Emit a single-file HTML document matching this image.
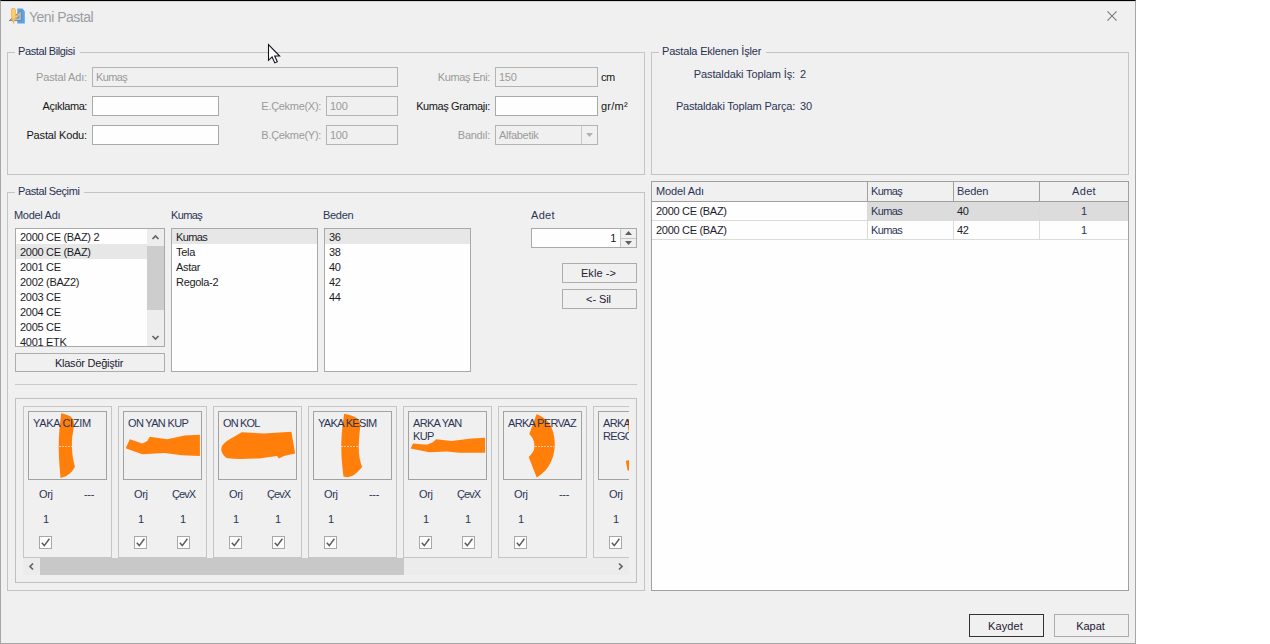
<!DOCTYPE html>
<html lang="tr">
<head>
<meta charset="utf-8">
<title>Yeni Pastal</title>
<style>
*{box-sizing:border-box;margin:0;padding:0}
html,body{width:1270px;height:644px;overflow:hidden;background:#fff}
body{font-family:"Liberation Sans",sans-serif;font-size:11px;letter-spacing:-0.3px;color:#2b3454;position:relative}
#win{position:absolute;left:0;top:0;width:1136px;height:644px;background:#f0f0f0}
#wb{position:absolute;left:0;top:0;width:1136px;height:644px;border:1px solid #a6a6a6;border-top-color:#000}
.a{position:absolute;white-space:nowrap;line-height:13px;height:13px}
.nv{color:#2b3454;letter-spacing:-0.12px}
.r{text-align:right}
.c{text-align:center}
.k{color:#141414}
.k2{color:#1c1c2c}
.dis{color:#9a9a9a}
.gb{position:absolute;border:1px solid #c4c4c4}
.gbl{position:absolute;background:#f0f0f0;padding:0 5px 0 3px;line-height:13px;height:13px;white-space:nowrap;color:#283152}
.in{color:#1c1c1c;position:absolute;border:1px solid #a9a9a9;background:#fefefe;height:20px;line-height:18px;padding-left:3px;white-space:nowrap;overflow:hidden}
.in.d{background:#f0f0f0;color:#9a9a9a;border-color:#b4b4b4}
.btn{color:#1e2030;position:absolute;border:1px solid #adadad;background:#f0f0f0;text-align:center;white-space:nowrap}
.lb{position:absolute;border:1px solid #a9a9a9;background:#fefefe;overflow:hidden}
.li{color:#1c1c26;height:15px;line-height:17px;padding-left:4px;white-space:nowrap}
.li.s{background:#e7e7e7}
.vl{position:absolute;top:202px;width:1px;height:38px;background:#dadada}
.vh{position:absolute;top:182px;width:1px;height:19px;background:#a0a0a0}
.vsb{position:absolute;left:131px;top:0;width:17px;height:117px;background:#ededed}
.vth{position:absolute;left:0;top:17px;width:17px;height:64px;background:#cdcdcd}
.card{position:absolute;top:406px;width:89px;height:152px;border:1px solid #c6c6c6}
.ib{position:absolute;top:411px;width:79px;height:69px;border:1px solid #a2a2a2}
.cn{top:417px;letter-spacing:-0.67px;white-space:nowrap}
.ck{position:absolute;top:536px}
</style>
</head>
<body>
<div id="win">
<div style="position:absolute;left:1px;top:1px;width:1134px;height:1px;background:#d6d6d6"></div><div id="wb"></div>
<!-- TITLE -->
<div id="title" class="a" style="left:29px;top:9px;font-size:14px;letter-spacing:-0.5px;line-height:16px;height:16px;color:#9a9da3">Yeni Pastal</div>
<svg id="closex" class="a" style="left:1105px;top:10px;width:13px;height:13px" viewBox="0 0 13 13"><path d="M2.4 1.4 L11.6 10.6 M11.6 1.4 L2.4 10.6" stroke="#7c7c7c" stroke-width="1.1" fill="none"/></svg>

<svg id="ticon" style="position:absolute;left:9px;top:8px" width="16" height="16" viewBox="0 0 16 16">
<path d="M8.3 0.4 H13.6 L15.8 3.6 V15.6 H8.3 Z" fill="#55a4ea"/>
<path d="M0.2 12.6 L12.4 2.6 V12.6 Z" fill="#b9bcc0" stroke="#7d8084" stroke-width="0.9"/>
<path d="M6.6 10.4 L10.4 7 V10.4 Z" fill="#4d9be0"/>
<path d="M2.4 1.6 Q2.6 0.2 4.4 0.2 Q6.2 0.2 6.4 1.6 L6.6 7.6 L9 7.2 L9 9 L6.2 9.6 L5.2 13 L4.6 15.4 L3.8 13 L3 9.8 L2.4 7 Z" fill="#f7cf6e" stroke="#f4a540" stroke-width="0.7"/>
</svg>
<!-- GROUP 1 -->
<div class="gb" style="left:7px;top:52px;width:638px;height:123px"></div>
<div class="gbl" style="left:15px;top:45px;letter-spacing:-0.4px">Pastal Bilgisi</div>
<div class="a r dis" style="left:1px;width:86px;top:71px;letter-spacing:-0.15px">Pastal Adı:</div>
<div class="in d" style="left:92px;top:67px;width:306px;letter-spacing:-0.6px">Kumaş</div>
<div class="a r k" style="left:1px;width:86px;top:100px;letter-spacing:-0.42px">Açıklama:</div>
<div class="in" style="left:92px;top:96px;width:127px"></div>
<div class="a r k" style="left:1px;width:86px;top:129px;letter-spacing:-0.15px">Pastal Kodu:</div>
<div class="in" style="left:92px;top:125px;width:127px"></div>
<div class="a r dis" style="left:221px;width:100px;top:100px">E.Çekme(X):</div>
<div class="in d" style="left:326px;top:96px;width:72px">100</div>
<div class="a r dis" style="left:221px;width:100px;top:129px">B.Çekme(Y):</div>
<div class="in d" style="left:326px;top:125px;width:72px">100</div>
<div class="a r dis" style="left:401px;width:89px;top:71px;letter-spacing:-0.4px">Kumaş Eni:</div>
<div class="in d" style="left:495px;top:67px;width:103px">150</div>
<div class="a k" style="left:601px;top:71px;letter-spacing:-0.4px">cm</div>
<div class="a r k" style="left:401px;width:89px;top:100px;letter-spacing:-0.4px">Kumaş Gramajı:</div>
<div class="in" style="left:495px;top:96px;width:103px"></div>
<div class="a k" style="left:601px;top:100px;letter-spacing:0.25px">gr/m²</div>
<div class="a r dis" style="left:401px;width:89px;top:129px">Bandıl:</div>
<div class="in d" style="left:495px;top:125px;width:103px">Alfabetik</div>
<div style="position:absolute;left:581px;top:126px;width:1px;height:18px;background:#c8c8c8"></div>
<svg style="position:absolute;left:586px;top:133px;width:7px;height:4px" viewBox="0 0 7 4"><path d="M0 0 H7 L3.5 4 Z" fill="#b0b0b0"/></svg>

<!-- GROUP 2 -->
<div class="gb" style="left:651px;top:52px;width:478px;height:123px"></div>
<div class="gbl" style="left:659px;top:45px;letter-spacing:-0.2px">Pastala Eklenen İşler</div>
<div class="a r nv" style="left:661px;width:134px;top:68px">Pastaldaki Toplam İş:</div>
<div class="a nv" style="left:800px;top:68px">2</div>
<div class="a r nv" style="left:661px;width:134px;top:100px;letter-spacing:-0.2px">Pastaldaki Toplam Parça:</div>
<div class="a nv" style="left:800px;top:100px">30</div>

<!-- GROUP 3 -->
<div class="gb" style="left:7px;top:192px;width:638px;height:399px"></div>
<div class="gbl" style="left:15px;top:185px;letter-spacing:-0.4px">Pastal Seçimi</div>

<div class="a" style="left:14px;top:209px">Model Adı</div>
<div class="lb" style="left:15px;top:228px;width:150px;height:119px"><div class="li">2000 CE (BAZ) 2</div><div class="li s">2000 CE (BAZ)</div><div class="li">2001 CE</div><div class="li">2002 (BAZ2)</div><div class="li">2003 CE</div><div class="li">2004 CE</div><div class="li">2005 CE</div><div class="li">4001 ETK</div>
<div class="vsb"><svg style="position:absolute;left:4px;top:5px" width="9" height="6" viewBox="0 0 9 6"><path d="M1.5 5 L4.5 2 L7.5 5" stroke="#5f666b" stroke-width="1.75" fill="none"/></svg><div class="vth"></div><svg style="position:absolute;left:4px;top:106px" width="9" height="6" viewBox="0 0 9 6"><path d="M1.5 1 L4.5 4 L7.5 1" stroke="#5f666b" stroke-width="1.75" fill="none"/></svg></div>
</div>
<div class="btn" style="left:15px;top:353px;width:150px;height:19px;line-height:19px;padding-right:2px;letter-spacing:-0.22px">Klasör Değiştir</div>
<div class="a" style="left:171px;top:209px;letter-spacing:-0.6px">Kumaş</div>
<div class="lb" style="left:171px;top:228px;width:147px;height:144px"><div class="li s" style="letter-spacing:-0.6px">Kumas</div><div class="li">Tela</div><div class="li">Astar</div><div class="li">Regola-2</div></div>
<div class="a" style="left:323px;top:209px">Beden</div>
<div class="lb" style="left:324px;top:228px;width:147px;height:144px"><div class="li s">36</div><div class="li">38</div><div class="li">40</div><div class="li">42</div><div class="li">44</div></div>
<div class="a" style="left:531px;top:209px;letter-spacing:0.3px">Adet</div>
<div class="in r" style="left:531px;top:228px;width:106px;padding-right:20px">1</div>
<div style="position:absolute;left:620px;top:229px;width:16px;height:18px;background:#f0f0f0;border-left:1px solid #c4c4c4"></div>
<div style="position:absolute;left:621px;top:238px;width:15px;height:1px;background:#c4c4c4"></div>
<svg style="position:absolute;left:625px;top:231px" width="7" height="4" viewBox="0 0 7 4"><path d="M0 4 H7 L3.5 0 Z" fill="#5c6066"/></svg>
<svg style="position:absolute;left:625px;top:241px" width="7" height="4" viewBox="0 0 7 4"><path d="M0 0 H7 L3.5 4 Z" fill="#5c6066"/></svg>
<div class="btn" style="left:562px;top:263px;width:75px;height:20px;line-height:18px;padding-right:2px;letter-spacing:0.1px">Ekle -&gt;</div>
<div class="btn" style="left:562px;top:289px;width:75px;height:20px;line-height:18px;padding-right:2px;letter-spacing:-0.1px">&lt;- Sil</div>
<div style="position:absolute;left:15px;top:384px;width:622px;height:1px;background:#c8c8c8"></div>
<!-- PANEL -->
<div id="panel" style="position:absolute;left:15px;top:398px;width:622px;height:185px;border:1px solid #c0c0c0"></div>
<div id="clip" style="position:absolute;left:0;top:0;width:629px;height:560px;overflow:hidden">
<svg style="position:absolute;left:0;top:0" width="629" height="560" viewBox="0 0 629 560"><path d="M61.2 413.3 Q68.2 414.8 70.8 416.8 Q73.4 418.7 73.9 422.2 Q74.4 425.7 73.2 431.1 Q72.1 436.6 71.9 442.1 Q71.8 447.5 72.3 452.9 Q72.9 458.3 73.9 462.6 L74.9 466.9 Q72.9 470.7 69.8 473.4 Q66.7 476.2 63.6 477.1 L60.5 478.0 Q59.4 464.5 58.9 456.0 Q58.4 447.5 58.9 438.1 Q59.4 428.8 60.3 421.1 Z" fill="#ff7f0a"/><polygon points="126.1,447.2 129.9,439.3 142.3,443.5 147.3,441.0 149.8,436.8 167.1,439.3 184.5,435.5 199.9,434.8 199.9,455.9 182.0,455.2 164.7,452.9 142.3,454.2 126.1,448.4" fill="#ff7f0a"/><path d="M241.7 432.3 L264.0 433.5 L291.4 431.8 L295.1 453.4 L283.9 455.9 L278.9 458.4 L277.0 455.9 L259.1 458.4 Q229.3 459.6 226.2 457.8 Q223.0 455.9 221.8 452.1 Q220.6 448.4 222.4 445.3 Q224.3 442.2 229.2 439.5 Q234.2 436.8 237.9 434.6 Z" fill="#ff7f0a"/><path d="M344.2 413.7 Q353.4 415.4 357.1 418.2 Q360.9 421.1 360.2 426.7 Q359.6 432.3 359.0 439.8 Q358.4 447.2 359.0 453.4 Q359.6 459.6 360.9 463.4 L362.1 467.1 Q355.9 474.5 352.1 476.0 Q348.4 477.5 345.9 477.0 L343.5 476.5 Q341.7 462.1 341.4 453.4 Q341.0 444.7 341.6 436.0 Q342.2 427.3 343.2 420.5 Z" fill="#ff7f0a"/><polygon points="410.6,448.4 413.0,443.5 426.7,444.7 432.9,442.2 436.1,439.3 451.6,441.0 471.4,438.5 485.1,437.8 485.1,452.7 459.0,452.7 446.6,451.4 429.2,452.2" fill="#ff7f0a"/><path d="M536.7 413.9 Q545.3 418.0 548.5 422.3 Q551.6 426.6 553.2 432.2 Q554.8 437.8 554.8 444.1 Q554.8 450.5 553.2 456.1 Q551.6 461.6 548.5 466.4 Q545.3 471.2 541.0 474.4 L536.7 477.5 L528.7 456.9 Q533.5 452.1 534.1 448.9 Q534.8 445.7 534.1 442.5 Q533.5 439.3 531.4 436.6 L529.3 433.9 Z" fill="#ff7f0a"/><line x1="59" y1="446.5" x2="72" y2="446.5" stroke="#ffc89c" stroke-width="1" stroke-dasharray="2 1"/><line x1="341" y1="446.5" x2="358" y2="446.5" stroke="#ffc89c" stroke-width="1" stroke-dasharray="2 1"/><line x1="535" y1="446.5" x2="554" y2="446.5" stroke="#ffc89c" stroke-width="1" stroke-dasharray="2 1"/><polygon points="627,420 629,419 629,433 628,428" fill="#ff7f0a"/><polygon points="625.8,461 629,460 629,471 627.5,470" fill="#ff7f0a"/></svg>
<div class="card" style="left:23px"></div><div class="ib" style="left:28px"></div>
<div class="a cn" style="left:33px;letter-spacing:-0.32px">YAKA CIZIM</div>
<div class="a" style="left:39px;top:488px">Orj</div>
<div class="a c" style="left:39px;width:14px;top:513px">1</div>
<svg class="ck" style="left:39px" width="13" height="13" viewBox="0 0 13 13"><rect x="0.5" y="0.5" width="12" height="12" fill="#fefefe" stroke="#a8a8a8"/><path d="M2.8 6.8 L5.3 9.6 L10.4 2.8" stroke="#585d63" stroke-width="1.5" fill="none"/></svg>
<div class="a" style="left:84px;top:488px">---</div>
<div class="card" style="left:118px"></div><div class="ib" style="left:123px"></div>
<div class="a cn" style="left:128px">ON YAN KUP</div>
<div class="a" style="left:134px;top:488px">Orj</div>
<div class="a c" style="left:134px;width:14px;top:513px">1</div>
<svg class="ck" style="left:134px" width="13" height="13" viewBox="0 0 13 13"><rect x="0.5" y="0.5" width="12" height="12" fill="#fefefe" stroke="#a8a8a8"/><path d="M2.8 6.8 L5.3 9.6 L10.4 2.8" stroke="#585d63" stroke-width="1.5" fill="none"/></svg>
<div class="a" style="left:172px;top:488px;letter-spacing:-0.9px">ÇevX</div>
<div class="a c" style="left:176px;width:14px;top:513px">1</div>
<svg class="ck" style="left:177px" width="13" height="13" viewBox="0 0 13 13"><rect x="0.5" y="0.5" width="12" height="12" fill="#fefefe" stroke="#a8a8a8"/><path d="M2.8 6.8 L5.3 9.6 L10.4 2.8" stroke="#585d63" stroke-width="1.5" fill="none"/></svg>
<div class="card" style="left:213px"></div><div class="ib" style="left:218px"></div>
<div class="a cn" style="left:223px;letter-spacing:-0.85px">ON KOL</div>
<div class="a" style="left:229px;top:488px">Orj</div>
<div class="a c" style="left:229px;width:14px;top:513px">1</div>
<svg class="ck" style="left:229px" width="13" height="13" viewBox="0 0 13 13"><rect x="0.5" y="0.5" width="12" height="12" fill="#fefefe" stroke="#a8a8a8"/><path d="M2.8 6.8 L5.3 9.6 L10.4 2.8" stroke="#585d63" stroke-width="1.5" fill="none"/></svg>
<div class="a" style="left:267px;top:488px;letter-spacing:-0.9px">ÇevX</div>
<div class="a c" style="left:271px;width:14px;top:513px">1</div>
<svg class="ck" style="left:272px" width="13" height="13" viewBox="0 0 13 13"><rect x="0.5" y="0.5" width="12" height="12" fill="#fefefe" stroke="#a8a8a8"/><path d="M2.8 6.8 L5.3 9.6 L10.4 2.8" stroke="#585d63" stroke-width="1.5" fill="none"/></svg>
<div class="card" style="left:308px"></div><div class="ib" style="left:313px"></div>
<div class="a cn" style="left:318px">YAKA KESIM</div>
<div class="a" style="left:324px;top:488px">Orj</div>
<div class="a c" style="left:324px;width:14px;top:513px">1</div>
<svg class="ck" style="left:324px" width="13" height="13" viewBox="0 0 13 13"><rect x="0.5" y="0.5" width="12" height="12" fill="#fefefe" stroke="#a8a8a8"/><path d="M2.8 6.8 L5.3 9.6 L10.4 2.8" stroke="#585d63" stroke-width="1.5" fill="none"/></svg>
<div class="a" style="left:369px;top:488px">---</div>
<div class="card" style="left:403px"></div><div class="ib" style="left:408px"></div>
<div class="a cn" style="left:413px">ARKA YAN<br>KUP</div>
<div class="a" style="left:419px;top:488px">Orj</div>
<div class="a c" style="left:419px;width:14px;top:513px">1</div>
<svg class="ck" style="left:419px" width="13" height="13" viewBox="0 0 13 13"><rect x="0.5" y="0.5" width="12" height="12" fill="#fefefe" stroke="#a8a8a8"/><path d="M2.8 6.8 L5.3 9.6 L10.4 2.8" stroke="#585d63" stroke-width="1.5" fill="none"/></svg>
<div class="a" style="left:457px;top:488px;letter-spacing:-0.9px">ÇevX</div>
<div class="a c" style="left:461px;width:14px;top:513px">1</div>
<svg class="ck" style="left:462px" width="13" height="13" viewBox="0 0 13 13"><rect x="0.5" y="0.5" width="12" height="12" fill="#fefefe" stroke="#a8a8a8"/><path d="M2.8 6.8 L5.3 9.6 L10.4 2.8" stroke="#585d63" stroke-width="1.5" fill="none"/></svg>
<div class="card" style="left:498px"></div><div class="ib" style="left:503px"></div>
<div class="a cn" style="left:508px">ARKA PERVAZ</div>
<div class="a" style="left:514px;top:488px">Orj</div>
<div class="a c" style="left:514px;width:14px;top:513px">1</div>
<svg class="ck" style="left:514px" width="13" height="13" viewBox="0 0 13 13"><rect x="0.5" y="0.5" width="12" height="12" fill="#fefefe" stroke="#a8a8a8"/><path d="M2.8 6.8 L5.3 9.6 L10.4 2.8" stroke="#585d63" stroke-width="1.5" fill="none"/></svg>
<div class="a" style="left:559px;top:488px">---</div>
<div class="card" style="left:593px"></div><div class="ib" style="left:598px"></div>
<div class="a cn" style="left:603px">ARKA<br>REGOLA</div>
<div class="a" style="left:609px;top:488px">Orj</div>
<div class="a c" style="left:609px;width:14px;top:513px">1</div>
<svg class="ck" style="left:609px" width="13" height="13" viewBox="0 0 13 13"><rect x="0.5" y="0.5" width="12" height="12" fill="#fefefe" stroke="#a8a8a8"/><path d="M2.8 6.8 L5.3 9.6 L10.4 2.8" stroke="#585d63" stroke-width="1.5" fill="none"/></svg>
<div class="a" style="left:654px;top:488px">---</div>

</div>
<div style="position:absolute;left:23px;top:558px;width:606px;height:17px;background:#ececec"></div>
<div style="position:absolute;left:40px;top:558px;width:364px;height:17px;background:#c8c8c8"></div>
<svg style="position:absolute;left:28px;top:562px" width="6" height="9" viewBox="0 0 6 9"><path d="M5 1.5 L2 4.5 L5 7.5" stroke="#5f666b" stroke-width="1.75" fill="none"/></svg>
<svg style="position:absolute;left:618px;top:562px" width="6" height="9" viewBox="0 0 6 9"><path d="M1 1.5 L4 4.5 L1 7.5" stroke="#5f666b" stroke-width="1.75" fill="none"/></svg>

<!-- TABLE -->
<div id="tbl" style="position:absolute;left:651px;top:181px;width:478px;height:410px;border:1px solid #a0a0a0;background:#fefefe"></div>
<div style="position:absolute;left:652px;top:182px;width:476px;height:19px;background:#f0f0f0"></div>
<div style="position:absolute;left:652px;top:201px;width:476px;height:1px;background:#a0a0a0"></div>
<div style="position:absolute;left:868px;top:202px;width:260px;height:18px;background:#dcdcdc"></div>
<div style="position:absolute;left:652px;top:220px;width:476px;height:1px;background:#dadada"></div>
<div style="position:absolute;left:652px;top:239px;width:476px;height:1px;background:#dadada"></div>
<div class="vl" style="left:867px"></div><div class="vl" style="left:953px"></div><div class="vl" style="left:1039px"></div>
<div class="vh" style="left:867px"></div><div class="vh" style="left:953px"></div><div class="vh" style="left:1039px"></div>
<div class="a nv" style="left:656px;top:185px">Model Adı</div>
<div class="a nv" style="left:871px;top:185px;letter-spacing:-0.6px">Kumaş</div>
<div class="a nv" style="left:957px;top:185px">Beden</div>
<div class="a nv c" style="left:1040px;width:88px;top:185px;letter-spacing:0.3px">Adet</div>
<div class="a k2" style="left:656px;top:205px">2000 CE (BAZ)</div>
<div class="a" style="left:871px;top:205px;letter-spacing:-0.6px">Kumas</div>
<div class="a k2" style="left:957px;top:205px">40</div>
<div class="a c" style="left:1040px;width:88px;top:205px">1</div>
<div class="a k2" style="left:656px;top:224px">2000 CE (BAZ)</div>
<div class="a" style="left:871px;top:224px;letter-spacing:-0.6px">Kumas</div>
<div class="a k2" style="left:957px;top:224px">42</div>
<div class="a c" style="left:1040px;width:88px;top:224px">1</div>
<!-- BOTTOM BUTTONS -->
<div class="btn" style="left:969px;top:614px;width:75px;height:23px;line-height:23px;padding-right:2px;border-color:#333;letter-spacing:0.1px">Kaydet</div>
<div class="btn" style="left:1054px;top:614px;width:75px;height:23px;line-height:23px;padding-right:2px;letter-spacing:0px">Kapat</div>

<svg id="cursor" style="position:absolute;left:267px;top:43px;z-index:50" width="14" height="21" viewBox="0 0 14 21"><path d="M1.5 1.6 V17.3 L5.1 13.9 L7.8 19.9 L10.3 18.8 L7.7 13 L12.6 13 Z" fill="#fff" stroke="#15151c" stroke-width="1.1" stroke-linejoin="miter"/></svg>
</div>
</body>
</html>
